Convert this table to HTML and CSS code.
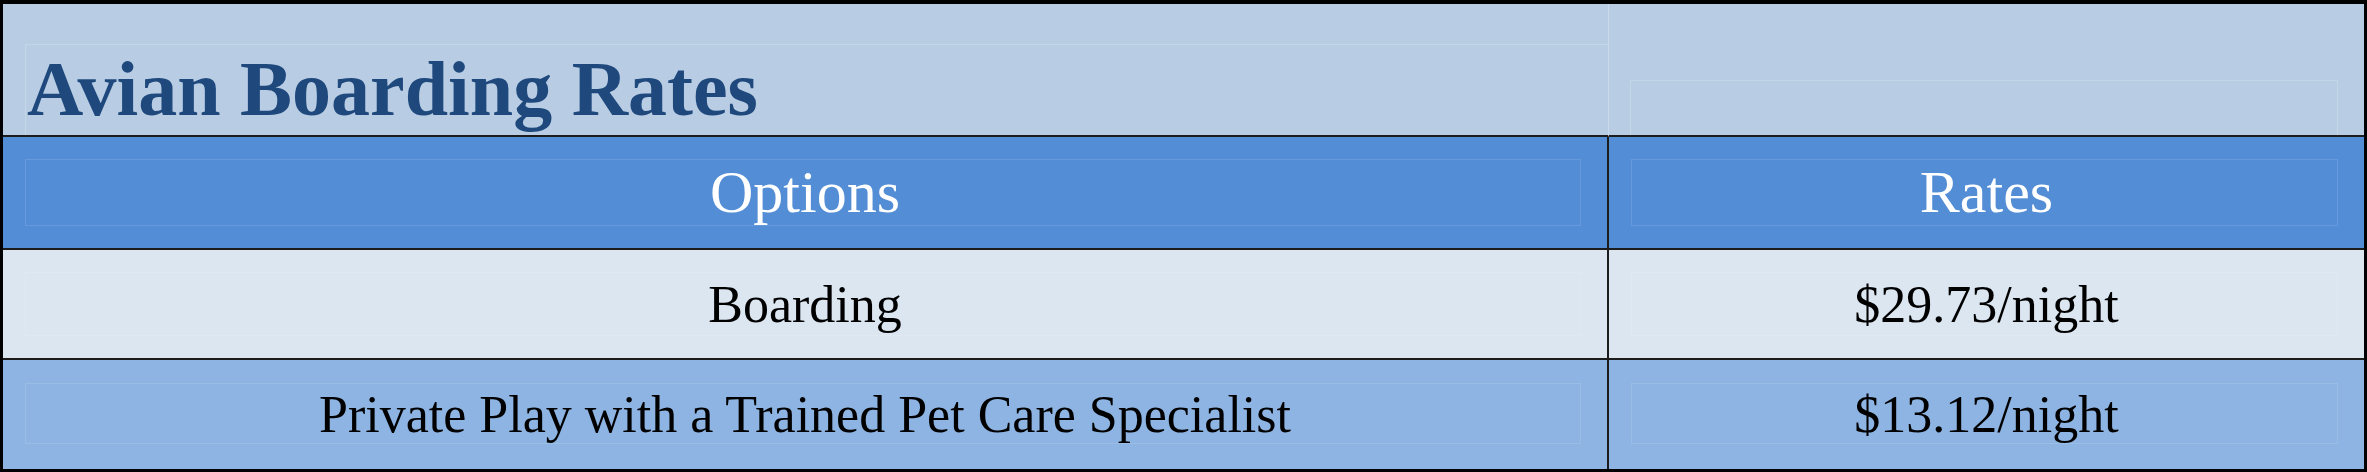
FILE: index.html
```html
<!DOCTYPE html>
<html lang="en">
<head>
<meta charset="utf-8">
<title>Avian Boarding Rates</title>
<link rel="stylesheet" href="styles.css">
</head>
<body>
<div class="sheet">
  <div class="cell title-main"><h1 class="title">Avian Boarding Rates</h1></div>
  <div class="cell title-side"></div>

  <div class="cell head col-left">Options</div>
  <div class="cell head">Rates</div>

  <div class="cell row-a col-left">Boarding</div>
  <div class="cell row-a">$29.73/night</div>

  <div class="cell row-b col-left last">Private Play with a Trained Pet Care Specialist</div>
  <div class="cell row-b last">$13.12/night</div>
</div>
</body>
</html>
```
FILE: styles.css
```css
html, body {
  margin: 0;
  padding: 0;
  background: #ffffff;
}

.sheet {
  box-sizing: border-box;
  width: 2367px;
  height: 472px;
  border-style: solid;
  border-color: #000000;
  border-width: 4px 3px 3px 3px;
  display: grid;
  grid-template-columns: 1606px 1fr;
  grid-template-rows: 133px 113px 110px 1fr;
  font-family: "Liberation Serif", "Times New Roman", serif;
}

.cell {
  position: relative;
  box-sizing: border-box;
  display: flex;
  align-items: center;
  justify-content: center;
  border-bottom: 2px solid #1c1c1c;
  color: #000000;
  font-size: 52px;
  line-height: normal;
}

.cell.last {
  border-bottom: none;
}

.col-left {
  border-right: 2px solid #1c1c1c;
}

.cell::before {
  content: "";
  position: absolute;
  top: 22px;
  left: 22px;
  right: 26px;
  bottom: 22px;
  border: 1px solid rgba(255, 255, 255, 0.12);
  pointer-events: none;
}

/* Title row */
.title-main,
.title-side {
  background: #b8cce4;
  border-bottom: 2px solid #1c1c1c;
}

.title-main {
  justify-content: flex-start;
  align-items: flex-end;
  padding: 0 0 1px 24px;
  border-right: 1px solid rgba(255, 255, 255, 0.25);
}

.title-main::before {
  top: 40px;
  left: 22px;
  right: 0;
  bottom: 0;
  border-right: none;
  border-bottom: none;
  border-color: rgba(255, 255, 255, 0.2);
}

.title-side::before {
  top: 76px;
  left: 21px;
  right: 26px;
  bottom: 0;
  border-bottom: none;
  border-color: rgba(255, 255, 255, 0.2);
}

.title {
  margin: 0;
  font-family: "Liberation Serif", "Times New Roman", serif;
  font-weight: bold;
  font-size: 78px;
  line-height: normal;
  color: #1f497d;
  white-space: nowrap;
}

/* Header row */
.head {
  background: #538dd5;
  color: #ffffff;
  font-size: 60px;
}

/* Body rows */
.row-a {
  background: #dce6f1;
}

.row-b {
  background: #8db4e2;
}

.row-b::before {
  top: 23px;
  bottom: 25px;
}
```
